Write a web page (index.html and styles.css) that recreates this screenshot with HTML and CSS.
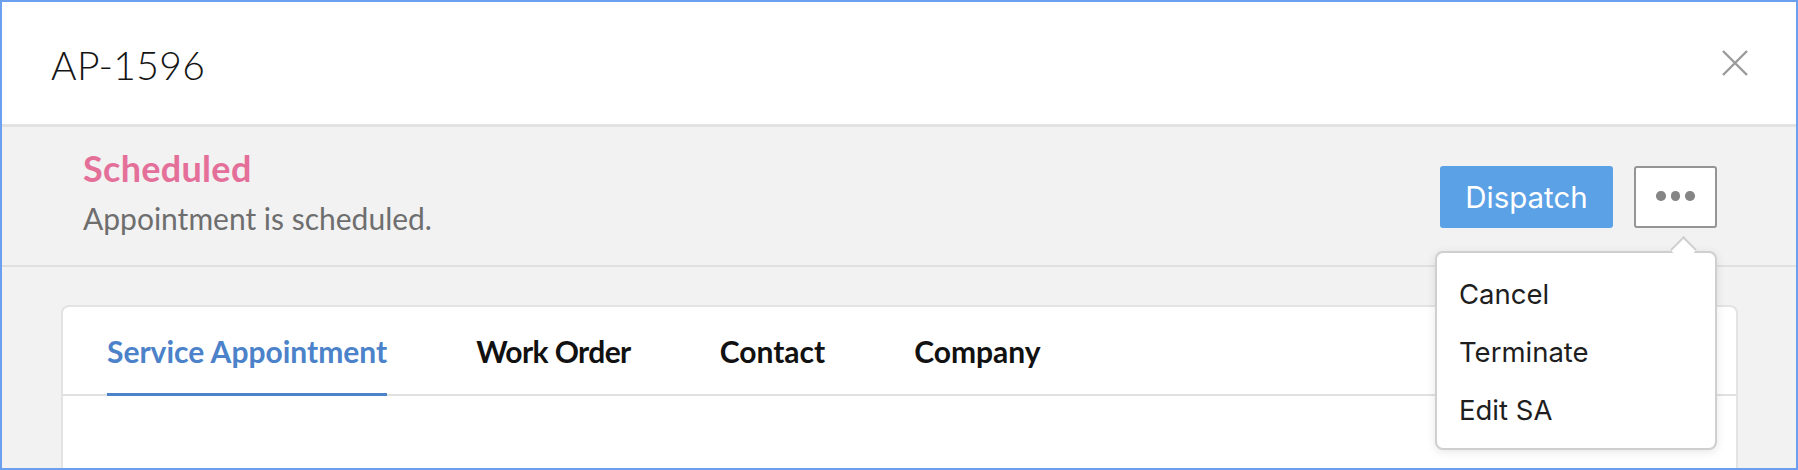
FILE: index.html
```html
<!DOCTYPE html>
<html lang="en">
<head>
<meta charset="utf-8">
<title>AP-1596</title>
<link rel="stylesheet" href="styles.css">
</head>
<body>
<div class="modal">
  <header class="modal-header">
    <h1 class="modal-title">AP-1596</h1>
    <button class="close-btn" aria-label="Close">
      <svg width="26" height="26" viewBox="0 0 26 26"><path d="M1 1 L25 25 M25 1 L1 25" stroke="#9a9a9a" stroke-width="2.4" fill="none"/></svg>
    </button>
  </header>
  <section class="status-bar">
    <div class="status-text">
      <div class="status-name">Scheduled</div>
      <div class="status-desc">Appointment is scheduled.</div>
    </div>
    <div class="actions">
      <button class="btn-dispatch">Dispatch</button>
      <button class="btn-more" aria-label="More"><span class="dot"></span><span class="dot"></span><span class="dot"></span></button>
      <div class="menu">
        <div class="menu-item">Cancel</div>
        <div class="menu-item">Terminate</div>
        <div class="menu-item">Edit SA</div>
      </div>
    </div>
  </section>
  <div class="body-area">
    <div class="card">
      <nav class="tabs">
        <div class="tab active">Service Appointment</div>
        <div class="tab tab-wo">Work Order</div>
        <div class="tab">Contact</div>
        <div class="tab">Company</div>
      </nav>
      <div class="card-content"></div>
    </div>
  </div>
</div>
</body>
</html>
```
FILE: styles.css
```css
* { box-sizing: border-box; }
html, body { margin: 0; padding: 0; }
body {
  width: 1798px;
  height: 470px;
  overflow: hidden;
  background: #ffffff;
  font-family: "Lato", "Liberation Sans", sans-serif;
}
.modal {
  width: 1798px;
  height: 470px;
  border: 2px solid #6c9fee;
  display: flex;
  flex-direction: column;
  overflow: hidden;
  background: #f2f2f2;
}
.modal-header {
  height: 125px;
  flex: none;
  background: #ffffff;
  border-bottom: 3px solid #e2e2e2;
  display: flex;
  align-items: center;
  justify-content: space-between;
  padding: 4px 48px 0 49px;
}
.modal-title {
  margin: 0;
  font-weight: 300;
  font-size: 39px;
  color: #141414;
  letter-spacing: 0.4px;
}
.close-btn {
  border: 0;
  background: transparent;
  padding: 0;
  width: 26px;
  height: 26px;
  display: block;
  margin-top: -4px;
}
.close-btn svg { display: block; }
.status-bar {
  flex: none;
  height: 140px;
  border-bottom: 2px solid #e0e0e0;
  display: flex;
  justify-content: space-between;
  align-items: flex-start;
  padding: 0 79px 0 81px;
}
.status-text { padding-top: 19px; }
.status-name {
  color: #e4709a;
  font-weight: 700;
  font-size: 36px;
  line-height: 44px;
  letter-spacing: 0.3px;
}
.status-desc {
  color: #6e6e6e;
  font-size: 30px;
  line-height: 40px;
  margin-top: 8px;
}
.actions {
  position: relative;
  display: flex;
  gap: 21px;
  margin-top: 39px;
}
.btn-dispatch {
  width: 173px;
  height: 62px;
  border: 0;
  border-radius: 3px;
  background: #5ba1e6;
  color: #ffffff;
  font-family: "Inter", "Liberation Sans", sans-serif;
  font-size: 29.5px;
  padding: 0;
}
.btn-more {
  width: 83px;
  height: 62px;
  background: #ffffff;
  border: 2px solid #959595;
  border-radius: 3px;
  display: flex;
  align-items: center;
  justify-content: center;
  gap: 5px;
  padding: 0 0 2px 0;
}
.dot {
  width: 9.5px;
  height: 9.5px;
  border-radius: 50%;
  background: #858585;
}
.menu {
  position: absolute;
  right: 0;
  top: 85px;
  width: 282px;
  height: 199px;
  background: #ffffff;
  border: 2px solid #cfcfcf;
  border-radius: 8px;
  box-shadow: 0 2px 10px rgba(0,0,0,0.10);
  padding: 12px 0 0 22px;
  z-index: 5;
}
.menu::before {
  content: "";
  position: absolute;
  right: 22px;
  top: -13px;
  width: 17px;
  height: 17px;
  background: #ffffff;
  border-left: 2px solid #cfcfcf;
  border-top: 2px solid #cfcfcf;
  transform: rotate(45deg);
  transform-origin: center;
}
.menu-item {
  font-family: "Inter", "Liberation Sans", sans-serif;
  font-size: 27.5px;
  color: #1e1e1e;
  line-height: 58px;
}
.body-area {
  flex: 1;
  padding: 38px 58px 0 59px;
}
.card {
  background: #ffffff;
  border: 2px solid #e3e3e3;
  border-bottom: 0;
  border-radius: 8px 8px 0 0;
  height: 100%;
}
.tabs {
  display: flex;
  gap: 89px;
  padding: 0 0 0 44px;
  border-bottom: 2px solid #e0e0e0;
  height: 89px;
}
.tab {
  font-weight: 700;
  font-size: 30px;
  color: #111111;
  display: flex;
  align-items: center;
  padding-top: 1px;
  border-bottom: 3px solid transparent;
  margin-bottom: -2px;
}
.tab-wo { letter-spacing: -0.6px; }
.tab.active {
  color: #4b82c9;
  border-bottom-color: #4b82c9;
}
```
